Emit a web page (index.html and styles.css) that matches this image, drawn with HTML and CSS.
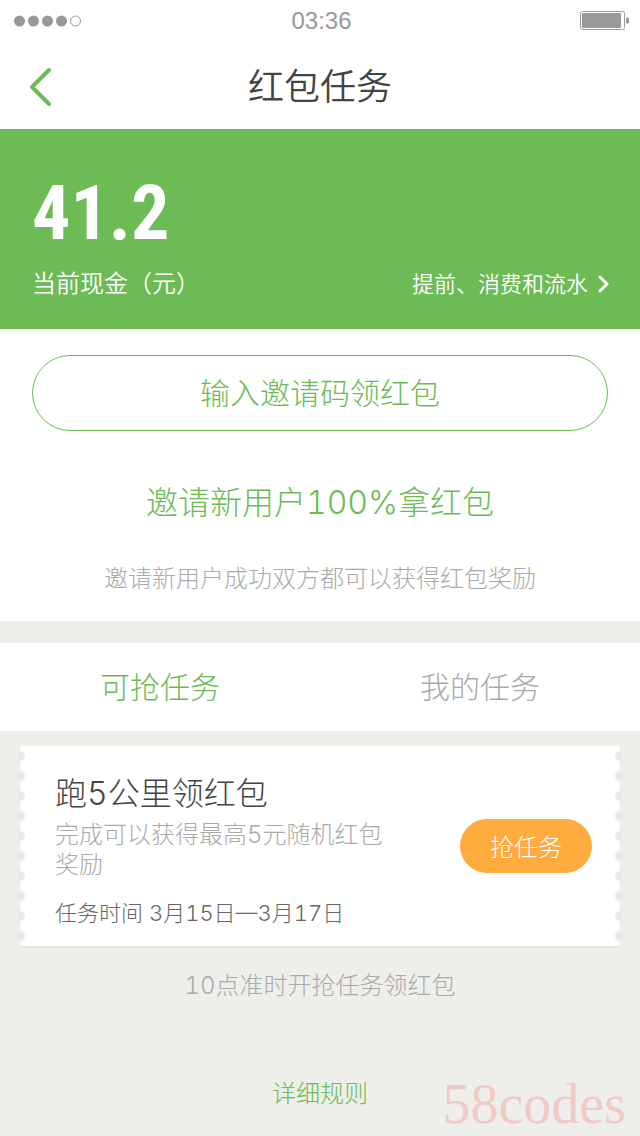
FILE: index.html
```html
<!DOCTYPE html>
<html lang="zh-CN">
<head>
<meta charset="utf-8">
<meta name="viewport" content="width=device-width, initial-scale=1">
<title>红包任务</title>
<link rel="stylesheet" href="styles.css">
</head>
<body>
<div class="status">
  <svg class="signal" width="68" height="12" viewBox="0 0 68 12" aria-hidden="true">
    <g fill="#999"><circle cx="5.5" cy="6" r="5.5"/><circle cx="19.5" cy="6" r="5.5"/><circle cx="33.5" cy="6" r="5.5"/><circle cx="47.5" cy="6" r="5.5"/></g>
    <circle cx="61.5" cy="6" r="5" fill="none" stroke="#999"/>
  </svg>
  <time class="clock">03:36</time>
  <svg class="battery" width="49" height="19" viewBox="0 0 49 19" aria-hidden="true">
    <rect x=".5" y=".5" width="44" height="18" rx="2" fill="none" stroke="#999"/>
    <rect x="2" y="2" width="39" height="15" rx="1" fill="#999"/>
    <path d="M46 6.5h1.5q1.500 0 1.500 1.500v3q0 1.500-1.500 1.500H46z" fill="#999"/>
  </svg>
</div>
<header class="header">
  <button class="back" type="button" aria-label="返回">
    <svg width="24" height="40" viewBox="0 0 24 40" fill="none" stroke="#6cbb54" stroke-width="4" stroke-linecap="round" stroke-linejoin="round"><path d="M21 3 4 20l17 17"/></svg>
  </button>
  <h1 class="title">红包任务</h1>
</header>
<main>
  <section class="balance">
    <p class="amount">41.2</p>
    <div class="balance-row">
      <span class="balance-label">当前现金（元）</span>
      <a class="balance-link" href="#flow">提前、消费和流水
        <svg width="12" height="18" viewBox="0 0 12 18" fill="none" stroke="currentColor" stroke-width="3" stroke-linecap="round" stroke-linejoin="round"><path d="m2 2 7 7-7 7"/></svg>
      </a>
    </div>
  </section>
  <section class="invite">
    <button class="code-button" type="button">输入邀请码领红包</button>
    <h2 class="invite-title">邀请新用户100%拿红包</h2>
    <p class="invite-text">邀请新用户成功双方都可以获得红包奖励</p>
  </section>
  <nav class="tabs">
    <a class="tab tab-active" href="#open" aria-current="page">可抢任务</a>
    <a class="tab" href="#mine">我的任务</a>
  </nav>
  <article class="ticket">
    <div class="ticket-body">
      <h3 class="ticket-title">跑5公里领红包</h3>
      <p class="ticket-text">完成可以获得最高5元随机红包奖励</p>
      <p class="ticket-time">任务时间 3月15日—3月17日</p>
    </div>
    <button class="grab" type="button">抢任务</button>
  </article>
  <p class="hint">10点准时开抢任务领红包</p>
</main>
<footer class="footer">
  <a class="rules" href="#rules">详细规则</a>
  <span class="mark">58codes</span>
</footer>
</body>
</html>
```
FILE: styles.css
```css
* { box-sizing: border-box; }

body {
  margin: 0;
  min-height: 100vh;
  display: flex;
  flex-direction: column;
  background: #eeefeb;
  color: #444;
  font-family: Inter, "Noto Sans CJK SC", sans-serif;
  font-weight: 300;
  font-variant-numeric: tabular-nums;
}

h1, h2, h3, p { margin: 0; font-weight: 300; }
a { text-decoration: none; }
button { font: inherit; cursor: pointer; }
svg { display: block; }

.status {
  display: grid;
  grid-template-columns: 1fr auto 1fr;
  align-items: center;
  height: 41px;
  padding: 0 11px 0 14px;
  background: #fff;
}
.clock {
  color: #999;
  font: 24px/40px "Liberation Sans", sans-serif;
}
.battery { justify-self: end; }

.header {
  display: grid;
  grid-template-columns: 80px 1fr 80px;
  align-items: center;
  height: 88px;
  padding-top: 4px;
  background: #fff;
}
.back {
  padding: 0 28px;
  border: 0;
  background: none;
}
.title {
  text-align: center;
  font-size: 36px;
  line-height: 48px;
  font-weight: 350;
}

.balance {
  padding: 42px 30px 28px 32px;
  background: #6cbb54;
  color: #fff;
}
.amount {
  font: bold 76px/84px "Roboto Condensed", Roboto, sans-serif;
}
.balance-row {
  display: flex;
  justify-content: space-between;
  align-items: center;
  padding-top: 12px;
  line-height: 34px;
  font-weight: 350;
}
.balance-label { font-size: 24px; }
.balance-link {
  display: flex;
  align-items: center;
  gap: 10px;
  color: #fff;
  font-size: 22px;
}

.invite {
  padding: 26px 32px 24px;
  background: #fff;
  text-align: center;
}
.code-button {
  width: 100%;
  height: 76px;
  padding: 0 0 4px;
  border: 1px solid #6cbb54;
  border-radius: 38px;
  background: #fff;
  color: #6cbb54;
  font-size: 30px;
}
.invite-title {
  padding-top: 48px;
  color: #6cbb54;
  font-size: 32px;
  line-height: 48px;
}
.invite-text {
  padding-top: 34px;
  color: #aaa;
  font-size: 24px;
  line-height: 36px;
}

.tabs {
  display: flex;
  margin-top: 22px;
  background: #fff;
}
.tab {
  flex: 1;
  color: #aaa;
  font-size: 30px;
  line-height: 88px;
  text-align: center;
}
.tab-active { color: #6cbb54; }

.ticket {
  display: flex;
  justify-content: space-between;
  align-items: center;
  margin: 15px 20px 0;
  padding: 16px 28px 16px 35px;
  background:
    radial-gradient(circle at 0 10px, #eaebe8 4px, transparent 6px) left top / 8px 20px repeat-y,
    radial-gradient(circle at 8px 10px, #eaebe8 4px, transparent 6px) right top / 8px 20px repeat-y,
    #fff;
  box-shadow: 0 1px 2px #dcddd8;
}
.ticket-body { max-width: 340px; }
.ticket-title {
  padding-top: 6px;
  font-size: 32px;
  line-height: 52px;
}
.ticket-text {
  color: #aaa;
  font-size: 24px;
  line-height: 30px;
}
.ticket-time {
  padding-top: 16px;
  color: #666;
  font-size: 22px;
  line-height: 34px;
}
.grab {
  width: 132px;
  height: 54px;
  padding: 0 0 2px;
  border: 0;
  border-radius: 27px;
  background: #ffab3d;
  color: #fff;
  font-size: 24px;
}

.hint {
  padding-top: 22px;
  color: #aaa;
  font-size: 24px;
  line-height: 36px;
  text-align: center;
}

.footer {
  display: grid;
  grid-template-columns: 1fr auto 1fr;
  margin-top: auto;
  padding: 0 14px;
}
.rules {
  grid-column: 2;
  color: #6cbb54;
  font-size: 24px;
  line-height: 84px;
}
.mark {
  align-self: end;
  justify-self: end;
  color: #f0cac6;
  font: 56px/64px "Liberation Serif", serif;
}
```
